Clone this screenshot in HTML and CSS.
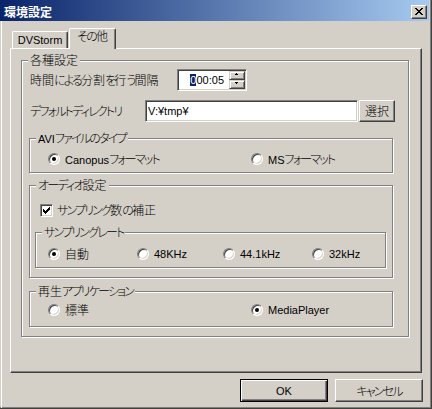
FILE: index.html
```html
<!DOCTYPE html>
<html lang="ja">
<head>
<meta charset="utf-8">
<title>環境設定</title>
<link rel="stylesheet" href="styles.css">
</head>
<body>
<div class="window">
  <div class="titlebar">
    <span class="title">環境設定</span>
    <span class="close"><svg width="14" height="12" viewBox="0 0 14 12"><path fill="#000" d="M3 2h2v1h-2z M9 2h2v1h-2z M4 3h2v1h-2z M8 3h2v1h-2z M5 4h4v1h-4z M6 5h2v1h-2z M5 6h4v1h-4z M4 7h2v1h-2z M8 7h2v1h-2z M3 8h2v1h-2z M9 8h2v1h-2z"/></svg></span>
  </div>
  <div class="client">
    <div class="tabs">
      <div class="tab"><span class="en">DVStorm</span></div>
      <div class="tab active"><span class="k">その</span>他</div>
    </div>
    <div class="panel">
      <div class="group g-main">
        <span class="legend">各種設定</span>
        <div class="row r1">
          <span class="label l1">時間<span class="k">による</span>分割<span class="k">を</span>行<span class="k">う</span>間隔</span>
          <div class="spin">
            <span class="spin-text en"><span class="sel">0</span>00:05</span>
            <span class="spin-btns">
              <span class="spin-btn"><svg width="14" height="7" viewBox="0 0 14 7"><path fill="#000" d="M6 2h1v1h-1z M5 3h3v1h-3z"/></svg></span>
              <span class="spin-btn"><svg width="14" height="7" viewBox="0 0 14 7"><path fill="#000" d="M5 2h3v1h-3z M6 3h1v1h-1z"/></svg></span>
            </span>
          </div>
        </div>
        <div class="row r2">
          <span class="label l2 k">デフォルトディレクトリ</span>
          <div class="edit en">V:¥tmp¥</div>
          <div class="btn btn-small">選択</div>
        </div>
        <div class="group g-avi">
          <span class="legend"><span class="en">AVI</span><span class="k">ファイルのタイプ</span></span>
          <div class="radios avi-radios">
            <label class="opt c1"><span class="radio on"></span><span><span class="en">Canopus</span><span class="k">フォーマット</span></span></label>
            <label class="opt"><span class="radio"></span><span><span class="en">MS</span><span class="k">フォーマット</span></span></label>
          </div>
        </div>
        <div class="group g-audio">
          <span class="legend"><span class="k">オーディオ</span>設定</span>
          <label class="chkrow"><span class="check"><svg width="11" height="11" viewBox="0 0 11 11"><path fill="#000" d="M8 2h1v1h-1z M7 3h2v1h-2z M2 4h1v1h-1z M6 4h3v1h-3z M2 5h2v1h-2z M5 5h3v1h-3z M2 6h5v1h-5z M3 7h3v1h-3z M4 8h1v1h-1z"/></svg></span><span><span class="k">サンプリング</span>数<span class="k">の</span>補正</span></label>
          <div class="group g-rate">
            <span class="legend k">サンプリングレート</span>
            <div class="radios rate-radios">
              <label class="opt s1"><span class="radio on"></span><span>自動</span></label>
              <label class="opt s2"><span class="radio"></span><span class="en">48KHz</span></label>
              <label class="opt s3"><span class="radio"></span><span class="en">44.1kHz</span></label>
              <label class="opt"><span class="radio"></span><span class="en">32kHz</span></label>
            </div>
          </div>
        </div>
        <div class="group g-play">
          <span class="legend">再生<span class="k">アプリケーション</span></span>
          <div class="radios play-radios">
            <label class="opt c1"><span class="radio"></span><span>標準</span></label>
            <label class="opt"><span class="radio on"></span><span class="en">MediaPlayer</span></label>
          </div>
        </div>
      </div>
    </div>
    <div class="buttons">
      <div class="btn btn-default"><span class="en">OK</span></div>
      <div class="btn"><span class="k">キャンセル</span></div>
    </div>
  </div>
</div>
</body>
</html>
```
FILE: styles.css
```css
* { box-sizing: border-box; }
html, body { margin: 0; padding: 0; }
body {
  width: 432px;
  height: 409px;
  overflow: hidden;
  background: #d4d0c8;
  font-family: "Noto Sans CJK JP", "Noto Sans", sans-serif;
  font-size: 12px;
  font-weight: 300;
  line-height: 14px;
  color: #000;
  font-feature-settings: "palt";
}
.en {
  font-family: "Liberation Sans", Arial, sans-serif;
  font-size: 11px;
  font-weight: 400;
  letter-spacing: 0;
}
.k { letter-spacing: -1.8px; }
.window {
  width: 432px;
  height: 409px;
  background: #d4d0c8;
  border-right: 1px solid #404040;
  border-bottom: 1px solid #404040;
  box-shadow: inset -1px -1px 0 #808080;
  display: flex;
  flex-direction: column;
}
.titlebar {
  flex: none;
  width: 429px;
  height: 21px;
  background: linear-gradient(to right, #0a246a, #a6caf0);
  display: flex;
  justify-content: space-between;
  align-items: flex-start;
  padding: 0 2px 0 4px;
}
.title {
  color: #fff;
  font-weight: bold;
  margin-top: 5px;
}
.close {
  width: 16px;
  height: 14px;
  margin-top: 5px;
  background: #d4d0c8;
  border: 1px solid;
  border-color: #fff #404040 #404040 #fff;
  box-shadow: inset -1px -1px 0 #808080;
  display: flex;
}
.client {
  flex: 1;
  margin-left: 1px;
  border-left: 1px solid #fff;
  display: flex;
  flex-direction: column;
}
.tabs {
  display: flex;
  align-items: flex-end;
  height: 20px;
  margin-top: 7px;
  padding-left: 10px;
}
.tab {
  width: 56px;
  height: 17px;
  border: 1px solid;
  border-bottom: 0;
  border-color: #fff #404040 transparent #fff;
  box-shadow: inset -1px 0 0 #808080;
  border-radius: 2px 2px 0 0;
  display: flex;
  justify-content: center;
  align-items: flex-start;
  padding-top: 1px;
}
.tab.active {
  width: 47px;
  height: 21px;
  margin-left: 1px;
  margin-bottom: -1px;
  position: relative;
  z-index: 1;
  background: #d4d0c8;
  padding-top: 0;
}
.panel {
  margin-left: 8px;
  width: 412px;
  height: 325px;
  border-left: 1px solid #fff;
  border-top: 1px solid #fff;
  border-right: 1px solid #404040;
  border-bottom: 1px solid #404040;
  box-shadow: inset -1px -1px 0 #808080;
  padding: 11px 0 0 10px;
}
.group {
  border: 1px solid #808080;
  box-shadow: 1px 1px 0 #fff, inset 1px 1px 0 #fff;
  display: flex;
  flex-direction: column;
  align-items: flex-start;
  flex: none;
}
.legend {
  margin: -8px 0 0 6px;
  padding: 0 2px;
  background: #d4d0c8;
  line-height: 14px;
  white-space: nowrap;
}
.g-main { width: 388px; height: 277px; }
.row {
  display: flex;
  align-items: center;
  align-self: stretch;
  padding-left: 8px;
}
.r1 { height: 22px; margin-top: 2px; }
.r2 { height: 22px; margin-top: 9px; }
.label { white-space: nowrap; flex: none; }
.l1 { width: 147px; }
.l2 { width: 115px; }
.spin {
  width: 70px;
  height: 22px;
  background: #fff;
  border: 1px solid;
  border-color: #808080 #fff #fff #808080;
  box-shadow: inset 1px 1px 0 #404040, inset -1px -1px 0 #d4d0c8;
  padding: 1px;
  display: flex;
}
.spin-text {
  flex: 1;
  text-align: right;
  padding-right: 5px;
  line-height: 18px;
}
.sel { background: #0a246a; color: #fff; }
.spin-btns {
  width: 16px;
  display: flex;
  flex-direction: column;
}
.spin-btn {
  height: 9px;
  background: #d4d0c8;
  border: 1px solid;
  border-color: #d4d0c8 #404040 #404040 #d4d0c8;
  box-shadow: inset 1px 1px 0 #fff, inset -1px -1px 0 #808080;
  display: flex;
  overflow: hidden;
}
.spin-btn svg { margin-top: -1px; }
.edit {
  width: 213px;
  height: 22px;
  background: #fff;
  border: 1px solid;
  border-color: #808080 #fff #fff #808080;
  box-shadow: inset 1px 1px 0 #404040, inset -1px -1px 0 #d4d0c8;
  padding-left: 2px;
  line-height: 20px;
  flex: none;
}
.btn {
  width: 88px;
  height: 23px;
  background: #d4d0c8;
  border: 1px solid;
  border-color: #fff #404040 #404040 #fff;
  box-shadow: inset -1px -1px 0 #808080;
  display: flex;
  align-items: center;
  justify-content: center;
  flex: none;
}
.btn-small { width: 36px; height: 22px; margin-left: 1px; }
.btn-default {
  border-color: #000;
  box-shadow: inset 1px 1px 0 #fff, inset -1px -1px 0 #404040, inset -2px -2px 0 #808080;
}
.g-avi { width: 364px; height: 35px; margin: 16px 0 0 7px; }
.g-audio { width: 364px; height: 93px; margin: 12px 0 0 7px; }
.g-rate { width: 351px; height: 36px; margin: 15px 0 0 5px; }
.g-play { width: 364px; height: 36px; margin: 13px 0 0 7px; }
.radios {
  display: flex;
  align-items: center;
  height: 14px;
}
.avi-radios { margin-top: 6px; padding-left: 18px; }
.rate-radios { margin-top: 8px; padding-left: 12px; }
.play-radios { margin-top: 5px; padding-left: 18px; }
.opt {
  display: flex;
  align-items: center;
  gap: 5px;
  white-space: nowrap;
}
.c1 { width: 203px; }
.s1 { width: 89px; }
.s2 { width: 86px; }
.s3 { width: 89px; }
.radio {
  width: 12px;
  height: 12px;
  border-radius: 50%;
  background: #fff;
  border: 1px solid;
  border-color: #808080 #fff #fff #808080;
  box-shadow: inset 1px 1px 0 #404040, inset -1px -1px 0 #d4d0c8;
  position: relative;
  flex: none;
}
.radio.on::after {
  content: "";
  position: absolute;
  left: 3px;
  top: 3px;
  width: 4px;
  height: 4px;
  border-radius: 50%;
  background: #000;
}
.chkrow {
  display: flex;
  align-items: center;
  gap: 4px;
  height: 14px;
  margin-top: 11px;
  padding-left: 10px;
  white-space: nowrap;
}
.check {
  width: 13px;
  height: 13px;
  background: #fff;
  border: 1px solid;
  border-color: #808080 #fff #fff #808080;
  box-shadow: inset 1px 1px 0 #404040, inset -1px -1px 0 #d4d0c8;
  display: flex;
  flex: none;
}
.buttons {
  display: flex;
  gap: 7px;
  margin-top: 6px;
  padding-left: 238px;
}
```
